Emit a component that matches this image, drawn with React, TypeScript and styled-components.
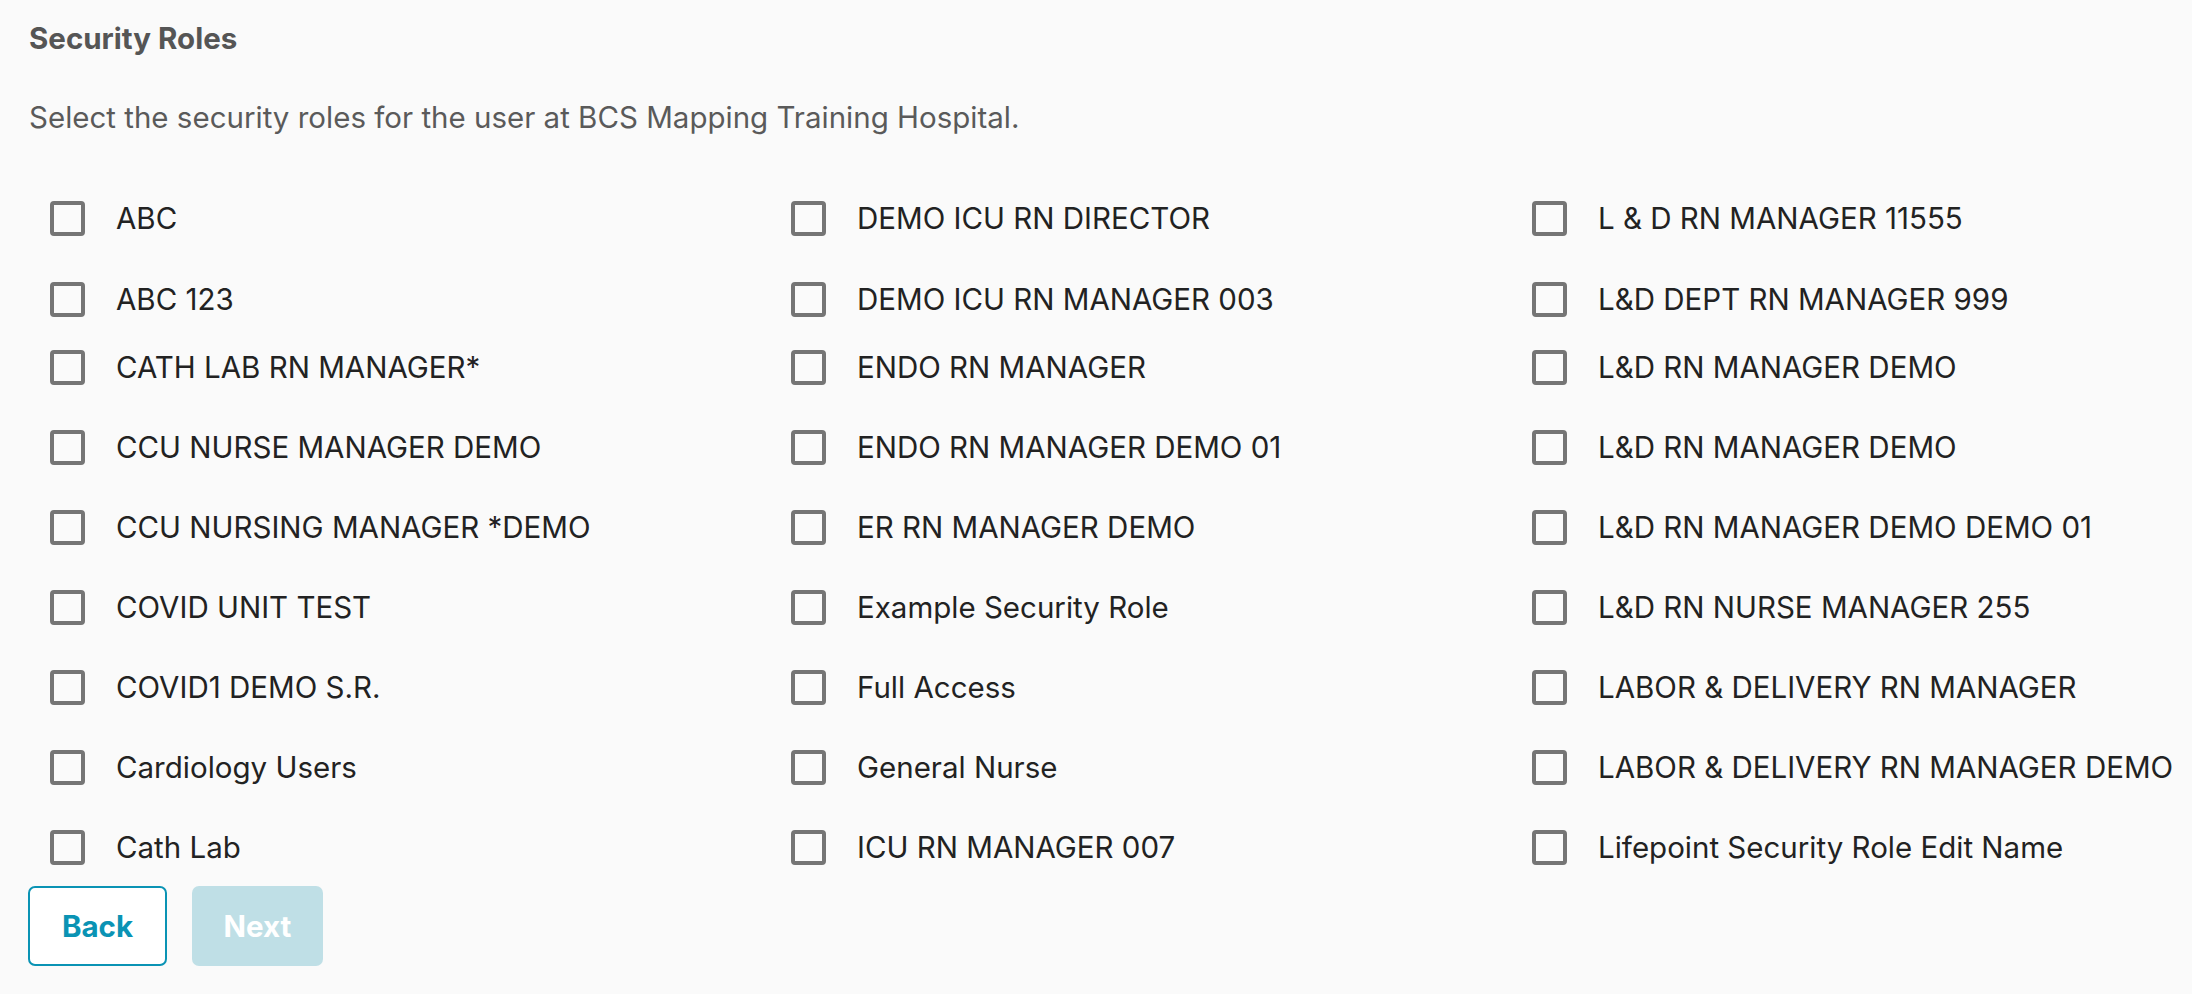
import React from 'react';
import styled, { createGlobalStyle } from 'styled-components';

const GlobalStyle = createGlobalStyle`
  html, body {
    margin: 0;
    padding: 0;
    background: #fafafa;
  }
  body {
    font-family: Inter, "Open Sans", "Liberation Sans", sans-serif;
  }
`;

const Page = styled.div`
  min-height: 994px;
  padding: 20px 28px 0 29px;
  box-sizing: border-box;
  background: #fafafa;
`;

const Title = styled.h2`
  margin: 0;
  font-size: 29.5px;
  line-height: 36px;
  font-weight: 700;
  color: #555555;
`;

const Intro = styled.p`
  margin: 43px 0 0 0;
  font-size: 29.5px;
  line-height: 36px;
  font-weight: 400;
  color: #5a5a5a;
`;

const RoleGrid = styled.div`
  margin-top: 65px;
  display: grid;
  grid-auto-flow: column;
  grid-template-columns: repeat(3, 741px);
  grid-template-rows: 81px 68px repeat(6, 80px) 36px;
  align-items: start;
  padding-left: 21px;
`;

const RoleItem = styled.label`
  display: flex;
  align-items: center;
  gap: 31px;
  height: 36px;
  font-size: 29.5px;
  line-height: 36px;
  color: #222222;
  white-space: nowrap;
  cursor: pointer;
`;

const Box = styled.span`
  flex: none;
  width: 35px;
  height: 35px;
  box-sizing: border-box;
  border: 4px solid #757575;
  border-radius: 4px;
  background: #fafafa;
`;

const Actions = styled.div`
  display: flex;
  gap: 25px;
  margin-top: 21px;
  margin-left: -1px;
`;

const Button = styled.button<{ $primary?: boolean }>`
  height: 80px;
  width: ${(p) => (p.$primary ? '131px' : '139px')};
  padding: 0;
  box-sizing: border-box;
  border-radius: 7px;
  font-family: inherit;
  font-size: 29.5px;
  font-weight: 700;
  border: ${(p) => (p.$primary ? 'none' : '2px solid #0a93b4')};
  background: ${(p) => (p.$primary ? '#bfdfe6' : '#ffffff')};
  color: ${(p) => (p.$primary ? '#ffffff' : '#0a93b4')};
  cursor: ${(p) => (p.$primary ? 'default' : 'pointer')};
`;

const roles = [
  'ABC',
  'ABC 123',
  'CATH LAB RN MANAGER*',
  'CCU NURSE MANAGER DEMO',
  'CCU NURSING MANAGER *DEMO',
  'COVID UNIT TEST',
  'COVID1 DEMO S.R.',
  'Cardiology Users',
  'Cath Lab',
  'DEMO ICU RN DIRECTOR',
  'DEMO ICU RN MANAGER 003',
  'ENDO RN MANAGER',
  'ENDO RN MANAGER DEMO 01',
  'ER RN MANAGER DEMO',
  'Example Security Role',
  'Full Access',
  'General Nurse',
  'ICU RN MANAGER 007',
  'L & D RN MANAGER 11555',
  'L&D DEPT RN MANAGER 999',
  'L&D RN MANAGER DEMO',
  'L&D RN MANAGER DEMO',
  'L&D RN MANAGER DEMO DEMO 01',
  'L&D RN NURSE MANAGER 255',
  'LABOR & DELIVERY RN MANAGER',
  'LABOR & DELIVERY RN MANAGER DEMO',
  'Lifepoint Security Role Edit Name',
];

const App = () => {
  return (
    <Page>
      <GlobalStyle />
      <Title>Security Roles</Title>
      <Intro>Select the security roles for the user at BCS Mapping Training Hospital.</Intro>
      <RoleGrid>
        {roles.map((role, i) => (
          <RoleItem key={i}>
            <Box />
            {role}
          </RoleItem>
        ))}
      </RoleGrid>
      <Actions>
        <Button>Back</Button>
        <Button $primary disabled>
          Next
        </Button>
      </Actions>
    </Page>
  );
};

export default App;
